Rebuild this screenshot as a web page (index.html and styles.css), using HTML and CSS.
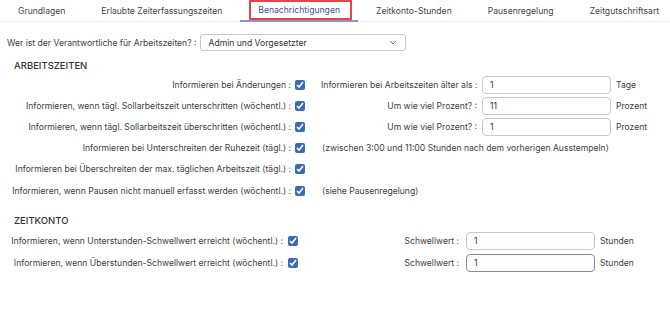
FILE: index.html
```html
<!DOCTYPE html>
<html lang="de">
<head>
  <meta charset="UTF-8">
  <title>Benachrichtigungen</title>
  <link rel="stylesheet" href="styles.css">
</head>
<body>
  <nav class="tabs">
    <a class="tab">Grundlagen</a>
    <a class="tab">Erlaubte Zeiterfassungszeiten</a>
    <a class="tab active">Benachrichtigungen</a>
    <a class="tab">Zeitkonto-Stunden</a>
    <a class="tab">Pausenregelung</a>
    <a class="tab">Zeitgutschriftsart</a>
  </nav>

  <div class="responsible">
    <label>Wer ist der Verantwortliche für Arbeitszeiten? :</label>
    <div class="select">
      <span>Admin und Vorgesetzter</span>
      <svg width="8" height="5" viewBox="0 0 8 5"><path d="M1 1l3 3 3-3" fill="none" stroke="#777" stroke-width="1"/></svg>
    </div>
  </div>

  <h2 class="section-title">ARBEITSZEITEN</h2>
  <div class="grid work">
    <label class="lbl">Informieren bei Änderungen :</label>
    <input type="checkbox" checked>
    <label class="rlbl">Informieren bei Arbeitszeiten älter als :</label>
    <input class="field" type="text" value="1">
    <span class="unit">Tage</span>

    <label class="lbl">Informieren, wenn tägl. Sollarbeitszeit unterschritten (wöchentl.) :</label>
    <input type="checkbox" checked>
    <label class="rlbl">Um wie viel Prozent? :</label>
    <input class="field" type="text" value="11">
    <span class="unit">Prozent</span>

    <label class="lbl">Informieren, wenn tägl. Sollarbeitszeit überschritten (wöchentl.) :</label>
    <input type="checkbox" checked>
    <label class="rlbl">Um wie viel Prozent? :</label>
    <input class="field" type="text" value="1">
    <span class="unit">Prozent</span>

    <label class="lbl">Informieren bei Unterschreiten der Ruhezeit (tägl.) :</label>
    <input type="checkbox" checked>
    <span class="note">(zwischen 3:00 und 11:00 Stunden nach dem vorherigen Ausstempeln)</span>

    <label class="lbl">Informieren bei Überschreiten der max. täglichen Arbeitszeit (tägl.) :</label>
    <input type="checkbox" checked>
    <span class="note"></span>

    <label class="lbl">Informieren, wenn Pausen nicht manuell erfasst werden (wöchentl.) :</label>
    <input type="checkbox" checked>
    <span class="note">(siehe Pausenregelung)</span>
  </div>

  <h2 class="section-title konto-title">ZEITKONTO</h2>
  <div class="grid konto">
    <label class="lbl">Informieren, wenn Unterstunden-Schwellwert erreicht (wöchentl.) :</label>
    <input type="checkbox" checked>
    <label class="rlbl">Schwellwert :</label>
    <input class="field" type="text" value="1">
    <span class="unit">Stunden</span>

    <label class="lbl">Informieren, wenn Überstunden-Schwellwert erreicht (wöchentl.) :</label>
    <input type="checkbox" checked>
    <label class="rlbl">Schwellwert :</label>
    <input class="field focus" type="text" value="1">
    <span class="unit">Stunden</span>
  </div>
</body>
</html>
```

FILE: styles.css
```css
* {
  box-sizing: border-box;
  margin: 0;
  padding: 0;
}
body {
  background-color: #fff;
  font-family: Inter, "Noto Sans", sans-serif;
  font-size: 8.6px;
  color: #3d3d3d;
}
.tabs {
  display: flex;
  height: 22px;
  border-bottom: 1px solid #f0f0f0;
  white-space: nowrap;
}
.tab {
  position: relative;
  display: flex;
  align-items: center;
  padding: 0 18px;
  color: #444;
}
.tab.active {
  color: #4a4f8f;
  border-bottom: 2px solid #8e93cf;
  margin-bottom: -1px;
}
.tab.active::before {
  content: "";
  position: absolute;
  left: 9px;
  right: 6px;
  top: 0;
  bottom: 0;
  border: 2px solid #e8434a;
}
.responsible {
  display: flex;
  align-items: center;
  margin-top: 12px;
  padding-left: 7px;
}
.responsible label {
  margin-right: 4px;
}
.select {
  display: flex;
  align-items: center;
  justify-content: space-between;
  width: 206px;
  height: 17px;
  padding: 0 8px 0 7px;
  border: 1px solid #c8c8c8;
  border-radius: 3px;
  color: #333;
}
.section-title {
  font-size: 9.5px;
  font-weight: 500;
  color: #333;
  margin: 9px 0 0 14px;
}
.konto-title {
  margin-top: 14px;
}
.grid {
  display: grid;
  align-items: center;
  white-space: nowrap;
}
.work {
  grid-template-columns: 291px 30px 158px 133px 1fr;
  grid-auto-rows: 21.2px;
  margin-top: 3px;
}
.konto {
  grid-template-columns: 283px 30px 150px 133px 1fr;
  grid-auto-rows: 22px;
  margin-top: 4px;
}
.lbl {
  text-align: right;
}
.rlbl {
  text-align: right;
  padding-right: 2px;
}
.konto .rlbl {
  padding-right: 4px;
}
.note {
  grid-column: 3 / 6;
  padding-left: 1px;
}
input[type="checkbox"] {
  width: 10px;
  height: 10px;
  margin-left: 4px;
  accent-color: #3a6cb5;
}
.konto input[type="checkbox"] {
  margin-left: 5px;
}
.field {
  width: 129px;
  height: 18px;
  margin-left: 3px;
  padding: 0 7px;
  border: 1px solid #c8c8c8;
  border-radius: 4px;
  font-family: inherit;
  font-size: 8.6px;
  color: #333;
  outline: none;
}
.field.focus {
  border-color: #8187c6;
}
.unit {
  padding-left: 4px;
}
```
